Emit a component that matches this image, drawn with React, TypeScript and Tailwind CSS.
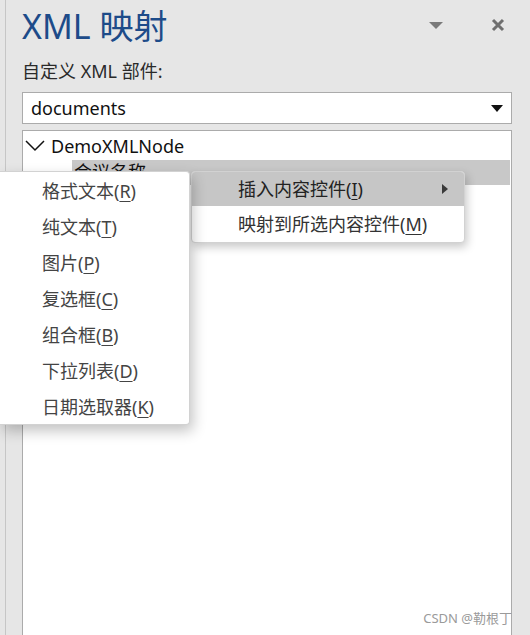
import React from "react";

const F = { fontFamily: '"Noto Sans", "Noto Sans CJK SC", sans-serif' };

function U({ c }: { c: string }) {
  return <span className="underline underline-offset-[3px] decoration-1">{c}</span>;
}

export default function App() {
  const sub: [string, string][] = [
    ["格式文本", "R"],
    ["纯文本", "T"],
    ["图片", "P"],
    ["复选框", "C"],
    ["组合框", "B"],
    ["下拉列表", "D"],
    ["日期选取器", "K"],
  ];
  return (
    <div className="relative w-[530px] h-[635px] overflow-hidden bg-[#e6e6e6] flex" style={F}>
      <div className="w-[5px] shrink-0" />
      <div className="w-px shrink-0 bg-[#c6c6c6]" />
      <div className="flex-1 flex flex-col pl-[16px] pr-[18px]">
        {/* header */}
        <div className="flex items-start h-[58px] pt-[6px]">
          <div className="text-[34px] leading-[40px] text-[#1d4b89] flex-1 whitespace-nowrap">XML 映射</div>
          <svg width="14" height="8" viewBox="0 0 14 8" className="mt-[16px] mr-[48px]">
            <path d="M0 0H14L7 7Z" fill="#7a7a7a" />
          </svg>
          <svg width="14" height="14" viewBox="0 0 14 14" className="mt-[12px] mr-[7px]">
            <path d="M2 2L12 12M12 2L2 12" stroke="#6f6f6f" strokeWidth="3" />
          </svg>
        </div>
        <div className="text-[18px] leading-[26px] text-[#2a2a2a] h-[34px]">自定义 XML 部件:</div>
        <div className="h-[32px] bg-white border border-[#ababab] flex items-center pl-[8px] pr-[8px]">
          <span className="flex-1 text-[18px] text-[#111] leading-[24px]">documents</span>
          <svg width="12" height="7" viewBox="0 0 12 7">
            <path d="M0 0H12L6 7Z" fill="#111" />
          </svg>
        </div>
        <div className="h-[6px]" />
        <div className="flex-1 bg-white border border-[#ababab] border-b-0 pt-[1px]">
          <div className="flex items-center h-[28px] pl-[2px]">
            <svg width="20" height="12" viewBox="0 0 20 12" className="mr-[6px]">
              <path d="M1 1L10 10L19 1" stroke="#111" strokeWidth="1.5" fill="none" />
            </svg>
            <span className="text-[18px] text-[#111] leading-[24px]">DemoXMLNode</span>
          </div>
          <div className="ml-[49px] mr-px h-[25px] bg-[#c8c8c8] text-[18px] leading-[24px] text-[#111] pl-[2px]">会议名称</div>
        </div>
      </div>

      {/* main context menu */}
      <div className="absolute left-[191px] top-[171px] w-[274px] bg-white rounded-[4px] border border-[#d2d2d2] shadow-[2px_4px_10px_rgba(0,0,0,0.22)] overflow-hidden">
        <div className="h-[34px] bg-[#c6c6c6] flex items-center pl-[46px] pr-[16px] text-[18px] text-[#222]">
          <span className="flex-1">插入内容控件(<U c="I" />)</span>
          <svg width="6" height="10" viewBox="0 0 6 10">
            <path d="M0 0L6 5L0 10Z" fill="#3a3a3a" />
          </svg>
        </div>
        <div className="h-[36px] flex items-center pl-[46px] text-[18px] text-[#333]">
          <span>映射到所选内容控件(<U c="M" />)</span>
        </div>
      </div>

      {/* submenu */}
      <div className="absolute left-0 top-[171px] w-[190px] h-[254px] bg-white rounded-r-[4px] border border-l-0 border-[#d2d2d2] shadow-[3px_6px_14px_rgba(0,0,0,0.24)] pt-px">
        {sub.map(([t, k]) => (
          <div key={k} className="h-[36px] flex items-center pl-[42px] text-[18px] text-[#444]">
            <span>
              {t}(<U c={k} />)
            </span>
          </div>
        ))}
      </div>

      <div className="absolute right-[18px] bottom-[9px] text-[13px] leading-[16px] text-[#9a9a9a]">CSDN @勒根丁</div>
    </div>
  );
}
